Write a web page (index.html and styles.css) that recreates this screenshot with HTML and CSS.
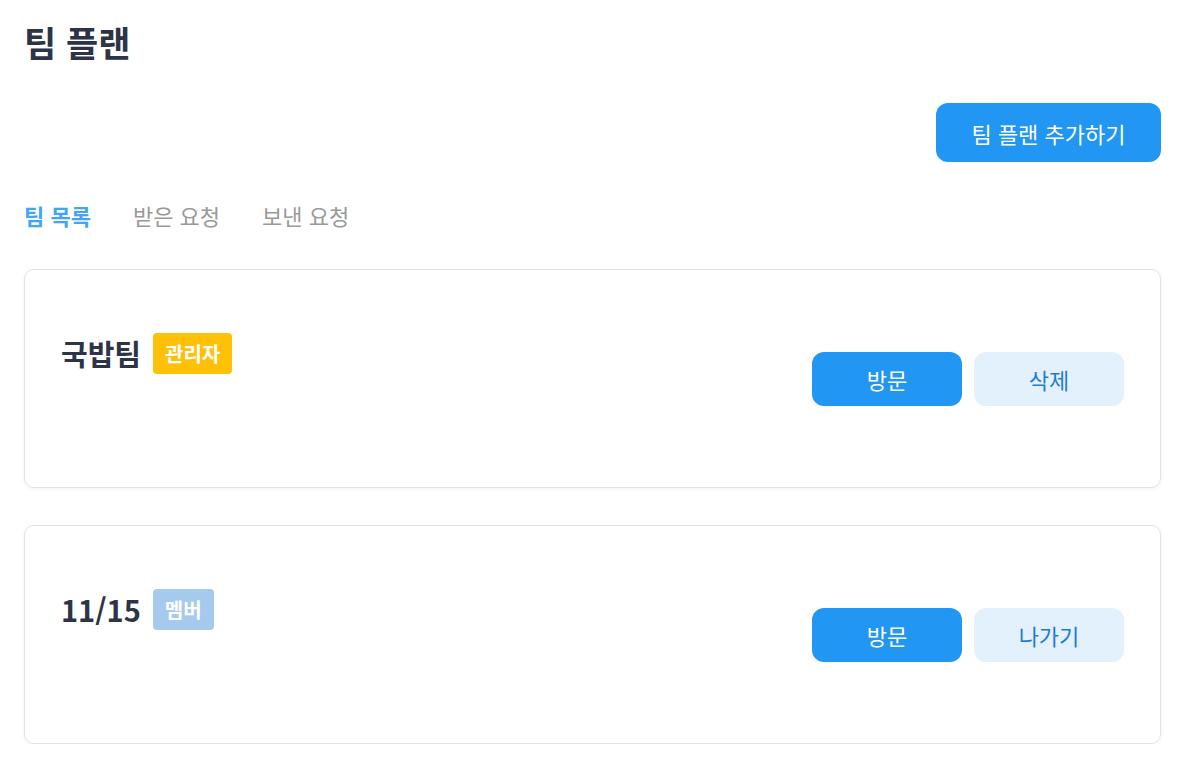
FILE: index.html
```html
<!DOCTYPE html>
<html lang="ko">
<head>
<meta charset="utf-8">
<title>팀 플랜</title>
<link rel="stylesheet" href="styles.css">
</head>
<body>
<div class="page">
  <h1 class="title">팀 플랜</h1>
  <div class="toolbar">
    <button class="btn-add">팀 플랜 추가하기</button>
  </div>
  <nav class="tabs">
    <span class="tab active">팀 목록</span>
    <span class="tab">받은 요청</span>
    <span class="tab">보낸 요청</span>
  </nav>
  <div class="list">
    <div class="card">
      <div class="card-info">
        <span class="card-name">국밥팀</span>
        <span class="badge badge-admin">관리자</span>
      </div>
      <div class="card-actions">
        <button class="btn btn-primary">방문</button>
        <button class="btn btn-light">삭제</button>
      </div>
    </div>
    <div class="card">
      <div class="card-info">
        <span class="card-name">11/15</span>
        <span class="badge badge-member">멤버</span>
      </div>
      <div class="card-actions">
        <button class="btn btn-primary">방문</button>
        <button class="btn btn-light">나가기</button>
      </div>
    </div>
  </div>
</div>
</body>
</html>
```

FILE: styles.css
```css
* { box-sizing: border-box; }
html, body { margin: 0; padding: 0; background: #fff; }
body {
  font-family: "Noto Sans CJK KR", "Noto Sans", sans-serif;
  color: #2d3446;
}
.page {
  padding: 18px 28px 0 24px;
}
.title {
  margin: 0;
  font-size: 35px;
  font-weight: 700;
  line-height: 48px;
  color: #2d3446;
}
.toolbar {
  display: flex;
  justify-content: flex-end;
  margin-top: 37px;
}
.btn-add {
  width: 225px;
  height: 59px;
  border: none;
  border-radius: 12px;
  background: #2196f3;
  color: #fff;
  font-family: inherit;
  font-size: 22px;
  padding: 0;
}
.tabs {
  display: flex;
  gap: 42px;
  margin-top: 38px;
  line-height: 30px;
}
.tab {
  font-size: 22px;
  color: #999;
}
.tab.active {
  color: #42a5f5;
  font-weight: 700;
}
.list {
  display: flex;
  flex-direction: column;
  gap: 37px;
  margin-top: 39px;
}
.card {
  height: 219px;
  border: 1px solid #e2e2e2;
  border-radius: 10px;
  box-shadow: 0 1px 4px rgba(0,0,0,0.06);
  display: flex;
  justify-content: space-between;
  align-items: center;
  padding: 0 36px 0 36px;
}
.card-info {
  align-self: flex-start;
  margin-top: 63px;
  display: flex;
  align-items: center;
  gap: 12px;
}
.card-name {
  font-size: 29px;
  line-height: 41px;
  font-weight: 700;
  color: #2d3446;
}
.badge {
  height: 41px;
  padding: 0 12px;
  border-radius: 4px;
  color: #fff;
  font-size: 20px;
  font-weight: 700;
  display: inline-flex;
  align-items: center;
}
.badge-admin { background: #ffc107; }
.badge-member { background: #a6caee; }
.card-actions {
  display: flex;
  gap: 12px;
}
.btn {
  width: 150px;
  height: 54px;
  border: none;
  border-radius: 12px;
  font-family: inherit;
  font-size: 22px;
  padding: 0;
}
.btn-primary { background: #2196f3; color: #fff; }
.btn-light { background: #e3f1fd; color: #1f7ad6; }
```
